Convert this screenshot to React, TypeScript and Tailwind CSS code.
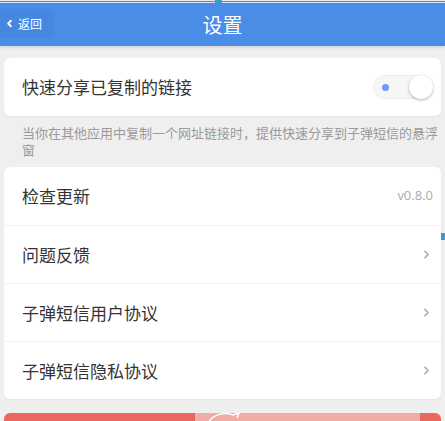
import { ChevronLeft, ChevronRight } from "lucide-react"

const font = { fontFamily: '"Noto Sans CJK SC", "Noto Sans", sans-serif' }

const rows = [
  { label: "检查更新", value: "v0.8.0" },
  { label: "问题反馈" },
  { label: "子弹短信用户协议" },
  { label: "子弹短信隐私协议" },
]

export default function App() {
  return (
    <div className="relative w-[445px] h-[421px] overflow-hidden bg-[#efefef]" style={font}>
      {/* top strip */}
      <div className="flex flex-col">
        <div className="h-px bg-[#e4eaf7]" />
        <div className="h-px bg-[#5d86d9]" />
        <div className="h-px bg-[#e4eaf7]" />
      </div>
      <div className="absolute left-[215px] top-0 w-[7px] h-[3px] bg-[#3a9dcf]" />

      {/* header */}
      <div className="relative h-[43px] bg-[#4a8de7] flex items-center justify-center shadow-[0_1px_3px_rgba(0,0,0,0.15)]">
        <div className="absolute left-0 top-[6px] h-[29px] w-[54px] rounded-r-md bg-[#4687e2] flex items-center pl-[4px] gap-[3px] text-white">
          <ChevronLeft className="w-[11px] h-[11px]" strokeWidth={4} />
          <span className="text-[12px] leading-none">返回</span>
        </div>
        <span className="text-white text-[20px] leading-none">设置</span>
      </div>

      {/* quick share card */}
      <div className="mx-[4px] mt-[12px] h-[58px] rounded-md bg-white flex items-center justify-between pl-[18px] pr-[8px] shadow-[0_1px_2px_rgba(0,0,0,0.05)]">
        <span className="text-[17px] text-[#333]">快速分享已复制的链接</span>
        <div className="relative w-[60px] h-[24px] rounded-full bg-[#f6f6f6] border border-[#ececec] flex items-center">
          <div className="ml-[8px] w-[7px] h-[7px] rounded-full bg-[#6d9bf3]" />
          <div className="absolute right-[-1px] top-[-1px] w-[24px] h-[24px] rounded-full bg-white shadow-[0_1px_3px_rgba(0,0,0,0.3)]" />
        </div>
      </div>

      <p className="pl-[22px] pr-[5px] mt-[8px] text-[13px] leading-[17px] text-[#9a9a9a]">
        当你在其他应用中复制一个网址链接时，提供快速分享到子弹短信的悬浮窗
      </p>

      {/* list card */}
      <div className="mx-[4px] mt-[9px] rounded-md bg-white shadow-[0_1px_2px_rgba(0,0,0,0.05)]">
        {rows.map((r, i) => (
          <div
            key={r.label}
            className={`h-[58px] flex items-center justify-between pl-[18px] pr-[8px] ${i > 0 ? "border-t border-[#f0f0f0]" : ""}`}
          >
            <span className="text-[17px] text-[#333]">{r.label}</span>
            {r.value ? (
              <span className="text-[13px] text-[#aaa]" style={{ fontFamily: '"Open Sans", sans-serif' }}>{r.value}</span>
            ) : (
              <ChevronRight className="w-[13px] h-[13px] text-[#aaa]" strokeWidth={3} />
            )}
          </div>
        ))}
      </div>
      <div className="absolute left-[441px] top-[233px] w-[4px] h-[7px] bg-[#3a9ad0]" />

      {/* bottom red bar */}
      <div className="mx-[4px] mt-[14px] h-[10px] rounded-t-md overflow-hidden flex">
        <div className="w-[191px] bg-[#e8675f]" />
        <div className="relative flex-1 bg-[#f0aca7]">
          <svg className="absolute left-[12px] top-[-1px]" width="36" height="10" viewBox="0 0 36 10">
            <path d="M2 10 C6 2 18 0 26 3 L32 1 L30 6" fill="none" stroke="#fff" strokeWidth="1.5" />
          </svg>
        </div>
        <div className="w-[21px] bg-[#e8675f]" />
      </div>
    </div>
  )
}
